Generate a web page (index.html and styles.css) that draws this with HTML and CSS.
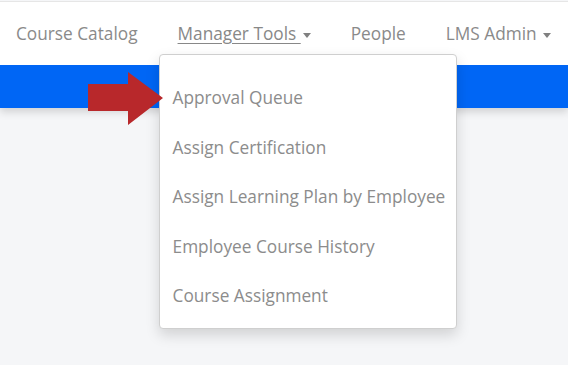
FILE: index.html
```html
<!DOCTYPE html>
<html lang="en">
<head>
    <meta charset="UTF-8">
    <meta name="viewport" content="width=device-width, initial-scale=1.0">
    <title>LMS - Manager Tools</title>
    <link rel="stylesheet" href="styles.css">
</head>
<body>
    <header class="topbar">
        <nav class="nav">
            <a class="nav-link" href="#">Course Catalog</a>
            <div class="nav-item">
                <a class="nav-link active" href="#">Manager Tools <span class="caret"></span></a>
                <ul class="dropdown">
                    <li><a href="#">Approval Queue</a></li>
                    <li><a href="#">Assign Certification</a></li>
                    <li><a href="#">Assign Learning Plan by Employee</a></li>
                    <li><a href="#">Employee Course History</a></li>
                    <li><a href="#">Course Assignment</a></li>
                </ul>
            </div>
            <a class="nav-link" href="#">People</a>
            <a class="nav-link" href="#">LMS Admin <span class="caret"></span></a>
        </nav>
    </header>
    <div class="band"></div>

    <!-- callout arrow pointing at the first menu entry -->
    <svg class="pointer" width="80" height="56" viewBox="0 0 80 56">
        <polygon points="0,12 40,12 40,0 75,26 40,53 40,39 0,39" fill="#b8282b"/>
    </svg>
</body>
</html>
```

FILE: styles.css
```css
body {
    margin: 0;
    font-family: "Open Sans", "Liberation Sans", sans-serif;
    background: #f5f6f8;
    color: #888;
    position: relative;
    height: 365px;
    overflow: hidden;
}
.topbar {
    background: #fff;
    border-top: 1px solid #e6e6e6;
    margin-top: 1px;
    height: 63px;
    position: relative;
    z-index: 2;
}
.nav {
    display: flex;
    align-items: center;
    height: 100%;
    padding-left: 16px;
    gap: 40px;
}
.nav-link {
    color: #8a8a8a;
    text-decoration: none;
    font-size: 17.25px;
    white-space: nowrap;
}
.nav-link.active {
    text-decoration: underline;
    text-underline-offset: 3px;
    color: #888;
}
.caret {
    display: inline-block;
    width: 0;
    height: 0;
    border-left: 4px solid transparent;
    border-right: 4px solid transparent;
    border-top: 5px solid #808080;
    vertical-align: middle;
    margin-left: 2px;
}
.nav-item {
    position: relative;
}
.dropdown {
    position: absolute;
    left: -19px;
    top: 32px;
    width: 296px;
    margin: 0;
    padding: 18px 0 7px;
    list-style: none;
    background: #fff;
    border: 1px solid #cfcfcf;
    border-radius: 4px;
    box-shadow: 0 6px 14px rgba(0, 0, 0, 0.15);
}
.dropdown li a {
    display: block;
    padding: 0 13px;
    line-height: 49.5px;
    font-size: 17.25px;
    color: #8c8c8c;
    text-decoration: none;
    white-space: nowrap;
}
.band {
    height: 43px;
    background: #0066f5;
    box-shadow: 0 4px 8px rgba(0, 0, 0, 0.15);
    position: relative;
    z-index: 1;
}
.pointer {
    position: absolute;
    left: 88px;
    top: 72px;
    z-index: 3;
}
```
